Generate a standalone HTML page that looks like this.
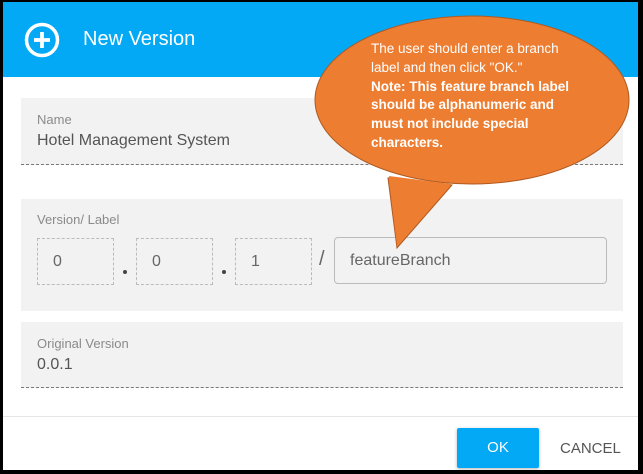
<!DOCTYPE html>
<html><head><style>
body{margin:0;width:643px;height:474px;background:#000;position:relative;overflow:hidden;font-family:"Liberation Sans",sans-serif}
.win{position:absolute;left:3px;top:2px;width:635px;height:468px;background:#fff;overflow:hidden}
.hdr{position:absolute;left:0;top:0;width:635px;height:75px;background:#03a9f4}
.hdr .t{position:absolute;left:80px;top:26px;color:#fff;font-size:20px}
.box{position:absolute;left:18px;width:602px;background:#f2f2f2}
.lbl{position:absolute;left:16px;color:#8a8a8a;font-size:13px}
.val{position:absolute;left:16px;color:#555;font-size:16px}
.dash{border-bottom:1px dashed #777}
.vb{position:absolute;top:39px;width:77px;height:47px;border:1px dashed #bbb;box-sizing:border-box;color:#666;font-size:16px;line-height:45px;padding-left:15px}
.dot{position:absolute;top:71px;width:4px;height:4px;background:#444;border-radius:50%}
.fb{position:absolute;left:313px;top:38px;width:273px;height:47px;border:1px solid #bbb;border-radius:4px;box-sizing:border-box;color:#666;font-size:16px;line-height:45px;padding-left:15px}
.ok{position:absolute;left:454px;top:426px;width:82px;height:40px;background:#03a9f4;border-radius:2px;color:#fff;font-size:15px;text-align:center;line-height:40px;box-shadow:0 1px 3px rgba(0,0,0,.3)}
.cancel{position:absolute;left:557px;top:438px;color:#555;font-size:15px}
.bt{position:absolute;left:371px;top:40px;width:240px;white-space:nowrap;color:#fff;font-size:13.5px;line-height:18.8px}
</style></head><body>
<div class="win">
<div class="hdr">
<svg style="position:absolute;left:21px;top:20px" width="36" height="36" viewBox="0 0 36 36"><circle cx="18" cy="18" r="15.5" fill="none" stroke="#fff" stroke-width="3.5"/><path d="M18 10v16M10 18h16" stroke="#fff" stroke-width="3.8"/></svg>
<div class="t">New Version</div></div>
<div class="box dash" style="top:96px;height:66px"><div class="lbl" style="top:14px">Name</div><div class="val" style="top:34px">Hotel Management System</div></div>
<div class="box" style="top:197px;height:112px"><div class="lbl" style="top:13px">Version/ Label</div>
<div class="vb" style="left:16px">0</div><div class="dot" style="left:102px"></div>
<div class="vb" style="left:115px">0</div><div class="dot" style="left:201px"></div>
<div class="vb" style="left:214px">1</div>
<div style="position:absolute;left:298px;top:49px;color:#666;font-size:20px">/</div>
<div class="fb">featureBranch</div></div>
<div class="box dash" style="top:320px;height:65px"><div class="lbl" style="top:14px">Original Version</div><div class="val" style="top:34px">0.0.1</div></div>
<div style="position:absolute;left:0;top:414px;width:635px;height:1px;background:#e6e6e6"></div>
<div class="ok">OK</div><div class="cancel">CANCEL</div>
</div>
<svg style="position:absolute;left:0;top:0" width="643" height="474"><path d="M388 178 L397 248 L452 185 Z" fill="#ed7d31" stroke="#ae5a21" stroke-width="1"/><ellipse cx="472" cy="100" rx="157" ry="84" fill="#ed7d31" stroke="#ae5a21" stroke-width="1"/><path d="M389 176 L397 246 L451 184 Z" fill="#ed7d31"/></svg>
<div class="bt">The user should enter a branch<br>label and then click "OK."<br><b>Note: This feature branch label<br>should be alphanumeric and<br>must not include special<br>characters.</b></div>
</body></html>
